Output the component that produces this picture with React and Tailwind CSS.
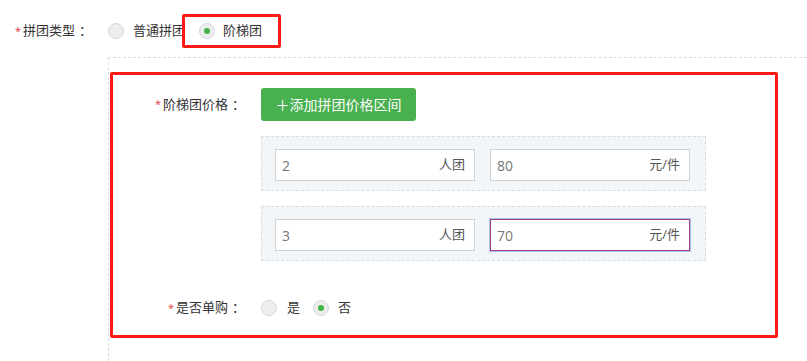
import React from 'react';

const Radio = ({ checked }) => (
  <span className="flex h-4 w-4 shrink-0 items-center justify-center rounded-full border border-[#d3d7df] bg-[#ededed]">
    {checked && <span className="h-[6px] w-[6px] rounded-full bg-[#3fb447]" />}
  </span>
);

const Label = ({ text, width }) => (
  <div className={`flex shrink-0 items-center justify-end text-[13px] text-[#333] ${width}`}>
    <span className="mr-[2px] text-[11px] text-[#e4393c]">*</span>
    <span>{text}</span>
    <span className="ml-1">：</span>
  </div>
);

const Field = ({ value, suffix, focused }) => (
  <div
    className={
      focused
        ? 'flex h-8 w-[200px] items-center justify-between border border-[#a3407c] bg-white pl-[6px] pr-[9px] shadow-[0_0_0_1px_#a8c2f2]'
        : 'flex h-8 w-[200px] items-center justify-between border border-[#cfd1d4] bg-white pl-[6px] pr-[9px]'
    }
  >
    <span className="text-[14px] text-[#777]">{value}</span>
    <span className="text-[13px] text-[#555]">{suffix}</span>
  </div>
);

const Tier = ({ people, price, focused }) => (
  <div className="flex w-[445px] gap-[15px] border border-dashed border-[#d8dde3] bg-[#f3f6f9] pb-[9px] pl-[13px] pt-3">
    <Field value={people} suffix="人团" />
    <Field value={price} suffix="元/件" focused={focused} />
  </div>
);

const App = () => {
  return (
    <div
      className="flex h-[361px] w-[807px] flex-col overflow-hidden bg-white"
      style={{ fontFamily: '"Open Sans", "Noto Sans CJK SC", sans-serif' }}
    >
      {/* 拼团类型 */}
      <div className="flex items-center pt-[14px]">
        <Label text="拼团类型" width="w-[92px]" />
        <div className="ml-4 flex items-center">
          <Radio />
          <span className="ml-[9px] w-[52px] text-[13px] text-[#333]">普通拼团</span>
        </div>
        <div className="-ml-[3px] flex h-[34px] items-center rounded-[2px] border-[3px] border-[#ff1a1a] pl-[14px] pr-[16px]">
          <Radio checked />
          <span className="ml-2 text-[13px] text-[#333]">阶梯团</span>
        </div>
      </div>

      {/* 阶梯团设置 */}
      <div className="ml-[108px] mt-[9px] flex-1 border-l border-t border-dashed border-[#dcdcdc]">
        <div className="ml-[1px] mt-[14px] flex h-[266px] w-[668px] flex-col rounded-[2px] border-[3px] border-[#ff1a1a] pt-[13px]">
          <div className="flex items-center">
            <Label text="阶梯团价格" width="w-[132px]" />
            <button className="ml-4 flex h-[33px] w-[155px] items-center justify-center rounded-[3px] bg-[#48b04e] text-[14px] text-white">
              ＋添加拼团价格区间
            </button>
          </div>
          <div className="ml-[148px] mt-[15px] flex flex-col gap-[15px]">
            <Tier people="2" price="80" />
            <Tier people="3" price="70" focused />
          </div>
          <div className="mt-[37px] flex h-5 items-center">
            <Label text="是否单购" width="w-[132px]" />
            <div className="ml-4 flex items-center">
              <Radio />
              <span className="ml-[10px] text-[13px] text-[#333]">是</span>
            </div>
            <div className="ml-[13px] flex items-center">
              <Radio checked />
              <span className="ml-[9px] text-[13px] text-[#333]">否</span>
            </div>
          </div>
        </div>
      </div>
    </div>
  );
};

export default App;
